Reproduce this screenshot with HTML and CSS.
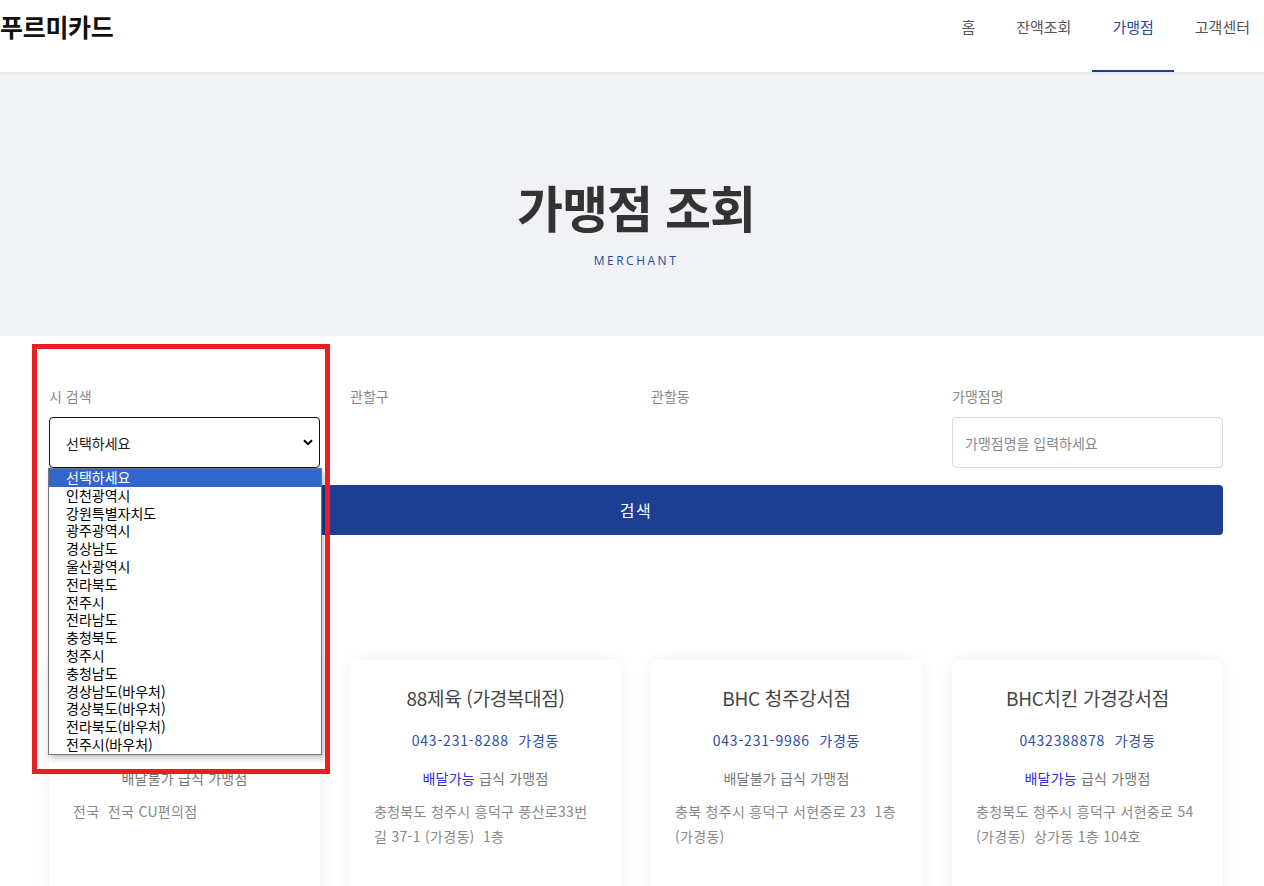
FILE: index.html
```html
<!DOCTYPE html>
<html lang="ko">
<head>
  <meta charset="UTF-8">
  <meta name="viewport" content="width=device-width, initial-scale=1.0">
  <title>가맹점 조회 - 푸르미카드</title>
  <link rel="stylesheet" href="styles.css">
</head>
<body>
<div class="page">
  <header class="site-header">
    <a class="logo" href="#">푸르미카드</a>
    <nav class="gnb">
      <a href="#">홈</a>
      <a href="#">잔액조회</a>
      <a href="#" class="active">가맹점</a>
      <a href="#">고객센터</a>
    </nav>
  </header>

  <section class="hero">
    <h1>가맹점 조회</h1>
    <p class="sub">MERCHANT</p>
  </section>

  <section class="search">
    <div class="container">
      <div class="search-row">
        <div class="field">
          <label>시 검색</label>
          <div class="select-box">
            <span>선택하세요</span>
            <svg width="10" height="7" viewBox="0 0 10 7"><path d="M1 1.2l4 4 4-4" fill="none" stroke="#000" stroke-width="2"/></svg>
          </div>
          <ul class="select-list">
            <li class="on">선택하세요</li>
            <li>인천광역시</li>
            <li>강원특별자치도</li>
            <li>광주광역시</li>
            <li>경상남도</li>
            <li>울산광역시</li>
            <li>전라북도</li>
            <li>전주시</li>
            <li>전라남도</li>
            <li>충청북도</li>
            <li>청주시</li>
            <li>충청남도</li>
            <li>경상남도(바우처)</li>
            <li>경상북도(바우처)</li>
            <li>전라북도(바우처)</li>
            <li>전주시(바우처)</li>
          </ul>
        </div>
        <div class="field">
          <label>관할구</label>
        </div>
        <div class="field">
          <label>관할동</label>
        </div>
        <div class="field">
          <label>가맹점명</label>
          <input type="text" class="text-input" placeholder="가맹점명을 입력하세요">
        </div>
      </div>
      <button class="btn-search">검색</button>
    </div>
  </section>

  <section class="result">
    <div class="container card-grid">
      <!-- first card: name and phone sit under the open select list -->
      <div class="card">
        <h3>&nbsp;</h3>
        <p class="tel">&nbsp;</p>
        <p class="type">배달불가 급식 가맹점</p>
        <p class="addr">전국&nbsp;&nbsp;전국 CU편의점</p>
      </div>
      <div class="card">
        <h3>88제육 (가경복대점)</h3>
        <p class="tel">043-231-8288&nbsp;&nbsp;가경동</p>
        <p class="type"><span class="deliv">배달가능</span> 급식 가맹점</p>
        <p class="addr">충청북도 청주시 흥덕구 풍산로33번길 37-1 (가경동)&nbsp;&nbsp;1층</p>
      </div>
      <div class="card">
        <h3>BHC 청주강서점</h3>
        <p class="tel">043-231-9986&nbsp;&nbsp;가경동</p>
        <p class="type">배달불가 급식 가맹점</p>
        <p class="addr">충북 청주시 흥덕구 서현중로 23&nbsp;&nbsp;1층 (가경동)</p>
      </div>
      <div class="card">
        <h3>BHC치킨 가경강서점</h3>
        <p class="tel">0432388878&nbsp;&nbsp;가경동</p>
        <p class="type"><span class="deliv">배달가능</span> 급식 가맹점</p>
        <p class="addr">충청북도 청주시 흥덕구 서현중로 54 (가경동)&nbsp;&nbsp;상가동 1층 104호</p>
      </div>
    </div>
  </section>

  <!-- capture annotation -->
  <div class="mark"></div>
</div>
</body>
</html>
```

FILE: styles.css
```css
html, body {
  margin: 0;
  padding: 0;
  overflow: hidden;
}
body {
  font-family: "Noto Sans CJK KR", "Noto Sans", sans-serif;
  color: #333;
  background: #fff;
}
.page {
  position: relative;
  width: 1272px;
  min-height: 886px;
}
a {
  text-decoration: none;
}

/* header */
.site-header {
  height: 72px;
  display: flex;
  justify-content: space-between;
  align-items: flex-start;
  background: #fff;
  box-shadow: 0 1px 3px rgba(0, 0, 0, 0.06);
  position: relative;
  z-index: 2;
}
.logo {
  color: #111;
  font-size: 25px;
  font-weight: 700;
  line-height: 30px;
  padding-top: 11px;
  letter-spacing: -0.3px;
}
.gnb {
  display: flex;
  margin-right: 1.5px;
}
.gnb a {
  display: block;
  height: 72px;
  box-sizing: border-box;
  padding: 16px 20.5px 0;
  font-size: 15px;
  line-height: 22px;
  color: #555;
  border-bottom: 2px solid transparent;
}
.gnb a.active {
  color: #2848a0;
  border-bottom-color: #1c3f94;
}

/* hero */
.hero {
  background: #f1f2f6;
  height: 264px;
  box-sizing: border-box;
  padding-top: 99px;
  text-align: center;
}
.hero h1 {
  margin: 0;
  font-size: 50px;
  line-height: 70px;
  font-weight: 700;
  color: #333;
  letter-spacing: -1px;
}
.hero .sub {
  margin: 12px 0 0;
  font-size: 12px;
  letter-spacing: 2.5px;
  color: #2848a0;
  font-family: "Open Sans", "Noto Sans", sans-serif;
  line-height: 16px;
}

/* search */
.container {
  width: 1174px;
  margin: 0 auto;
}
.search {
  padding-top: 50px;
}
.search-row {
  display: grid;
  grid-template-columns: repeat(4, 1fr);
  gap: 30px;
  margin-bottom: 17px;
}
.field {
  position: relative;
}
.field label {
  display: block;
  font-size: 14px;
  line-height: 20px;
  color: #888;
  margin-bottom: 11px;
}
.select-box {
  height: 51px;
  box-sizing: border-box;
  border: 1px solid #111;
  border-radius: 4px;
  display: flex;
  align-items: center;
  justify-content: space-between;
  padding: 0 6px 0 16px;
  font-size: 14px;
  color: #222;
}
.select-list {
  position: absolute;
  left: -1px;
  top: 82px;
  width: 272px;
  margin: 0;
  padding: 0;
  list-style: none;
  background: #fff;
  border: 1px solid #767676;
  box-shadow: 2px 3px 6px rgba(0, 0, 0, 0.25);
  z-index: 5;
  font-size: 14px;
  color: #000;
}
.select-list li {
  height: 17.8px;
  line-height: 17.8px;
  padding-left: 17px;
}
.select-list li.on {
  background: #3166cd;
  color: #fff;
}
.text-input {
  display: block;
  width: 100%;
  height: 51px;
  box-sizing: border-box;
  border: 1px solid #d3d6dc;
  border-radius: 4px;
  padding: 0 12px;
  font-family: inherit;
  font-size: 14px;
  color: #333;
}
.text-input::placeholder {
  color: #888;
}
.btn-search {
  display: block;
  width: 100%;
  height: 50px;
  border: 0;
  border-radius: 4px;
  background: #1c3f94;
  color: #fff;
  font-family: inherit;
  font-size: 16px;
  letter-spacing: 1.5px;
}

/* result cards */
.result {
  padding-top: 125px;
}
.card-grid {
  display: grid;
  grid-template-columns: repeat(4, 1fr);
  gap: 30px;
}
.card {
  background: #fff;
  border-radius: 8px;
  box-shadow: 0 0 18px rgba(0, 0, 0, 0.06);
  padding: 26px 24px 40px;
  min-height: 260px;
  text-align: center;
}
.card h3 {
  margin: 0;
  font-size: 19px;
  line-height: 24px;
  font-weight: 400;
  color: #444;
  letter-spacing: -0.3px;
}
.card .tel {
  margin: 20px 0 0;
  font-size: 14px;
  line-height: 20px;
  color: #2c4ea6;
  letter-spacing: 0.8px;
}
.card .type {
  margin: 18px 0 0;
  font-size: 14px;
  line-height: 20px;
  color: #777;
  letter-spacing: 0.2px;
}
.card .deliv {
  color: #2f2fe0;
}
.card .addr {
  margin: 11px 0 0;
  font-size: 14px;
  line-height: 25px;
  color: #888;
  text-align: left;
  letter-spacing: 0.3px;
}

/* red box drawn on the capture */
.mark {
  position: absolute;
  left: 32px;
  top: 344px;
  width: 298px;
  height: 430px;
  box-sizing: border-box;
  border: 5px solid #ec1c24;
  z-index: 10;
}
```
